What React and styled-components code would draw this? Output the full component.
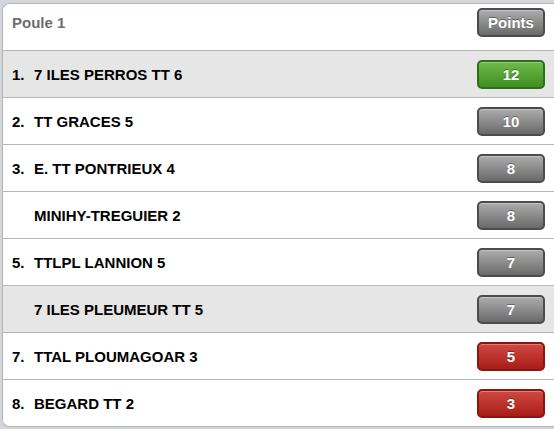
import styled, { createGlobalStyle } from 'styled-components';

const GlobalStyle = createGlobalStyle`
    html, body {
        margin: 0;
        padding: 0;
        background: #d3d6da;
        font-family: "Liberation Sans", Arial, sans-serif;
    }
`

const teams = [
    { rank: '1.', name: '7 ILES PERROS TT 6', points: 12, tone: 'green', shaded: true },
    { rank: '2.', name: 'TT GRACES 5', points: 10, tone: 'grey' },
    { rank: '3.', name: 'E. TT PONTRIEUX 4', points: 8, tone: 'grey' },
    { rank: '', name: 'MINIHY-TREGUIER 2', points: 8, tone: 'grey' },
    { rank: '5.', name: 'TTLPL LANNION 5', points: 7, tone: 'grey' },
    { rank: '', name: '7 ILES PLEUMEUR TT 5', points: 7, tone: 'grey', shaded: true },
    { rank: '7.', name: 'TTAL PLOUMAGOAR 3', points: 5, tone: 'red' },
    { rank: '8.', name: 'BEGARD TT 2', points: 3, tone: 'red' },
]

const tones = {
    grey: { top: '#acacac', bottom: '#6a6a6a', border: '#4c4c4c' },
    green: { top: '#6fba4a', bottom: '#3f8f22', border: '#2f6e18' },
    red: { top: '#d04a42', bottom: '#a81c17', border: '#8a1512' },
}

function App() {
    return (
        <>
            <GlobalStyle />
            <Page>
                <Card>
                    <HeaderRow>
                        <Title>Poule 1</Title>
                        <Badge tone="grey">Points</Badge>
                    </HeaderRow>
                    {
                        teams.map(team => (
                            <Row key={team.name} shaded={team.shaded}>
                                <Name>
                                    <Rank>{team.rank}</Rank>
                                    {team.name}
                                </Name>
                                <Badge tone={team.tone}>{team.points}</Badge>
                            </Row>
                        ))
                    }
                </Card>
            </Page>
        </>
    )
}

export default App

const Page = styled.div`
    width: 554px;
    height: 429px;
    padding: 3px 0 0 2px;
    box-sizing: border-box;
    overflow: hidden;
`

const Card = styled.div`
    background: #fff;
    border: 1px solid #b4b4b4;
    border-right: none;
    border-radius: 8px 0 0 8px;
    overflow: hidden;
    width: 560px;
`

const HeaderRow = styled.div`
    display: flex;
    align-items: flex-start;
    justify-content: space-between;
    height: 42px;
    padding: 4px 10px 0 9px;
    border-bottom: 1px solid #b6b6b6;
    background: #fff;
`

const Title = styled.span`
    color: #6e6e6e;
    font-weight: bold;
    font-size: 15px;
    line-height: 29px;
`

const Row = styled.div`
    display: flex;
    align-items: center;
    justify-content: space-between;
    height: 46px;
    padding: 0 10px 0 9px;
    border-bottom: 1px solid #b6b6b6;
    background: ${p => p.shaded ? '#e6e6e6' : '#fff'};

    &:last-child {
        border-bottom: none;
    }
`

const Name = styled.div`
    display: flex;
    align-items: center;
    color: #000;
    font-weight: bold;
    font-size: 15px;
`

const Rank = styled.span`
    display: inline-block;
    width: 22px;
`

const Badge = styled.div`
    width: 68px;
    height: 29px;
    box-sizing: border-box;
    margin-right: 8px;
    display: flex;
    align-items: center;
    justify-content: center;
    border-radius: 5px;
    border: 2px solid ${p => tones[p.tone].border};
    background: linear-gradient(to bottom, ${p => tones[p.tone].top}, ${p => tones[p.tone].bottom});
    box-shadow: inset 0 1px 0 rgba(255, 255, 255, 0.3);
    color: #fff;
    font-weight: bold;
    font-size: 15px;
    text-shadow: 0 -1px 0 rgba(0, 0, 0, 0.35);
`
